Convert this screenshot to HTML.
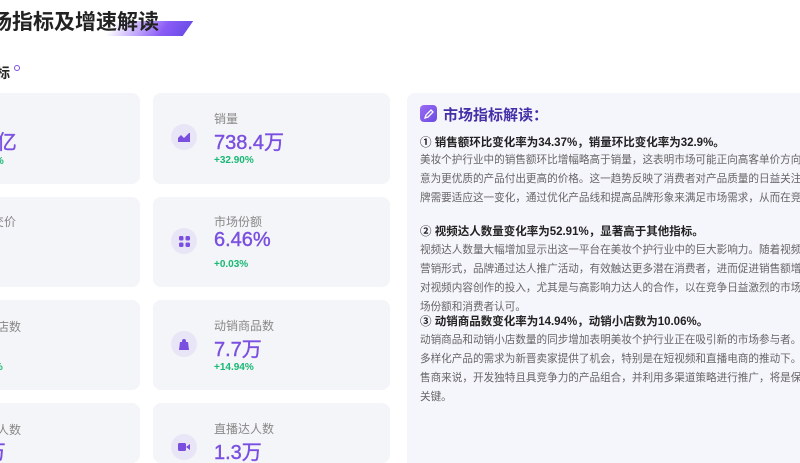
<!DOCTYPE html>
<html style="width:800px;height:463px;overflow:hidden"><head><meta charset="utf-8"><style>
*{margin:0;padding:0;box-sizing:border-box}
body{width:800px;height:463px;overflow:hidden;background:#fff;font-family:"Liberation Sans","Noto Sans CJK SC",sans-serif;position:relative}
.a{position:absolute;white-space:nowrap}
.card{position:absolute;background:#f4f5f8;border-radius:8px;width:237px;overflow:hidden}
.ic{position:absolute;left:18px;width:26px;height:26px;border-radius:50%;background:#e8e5f6;display:flex;align-items:center;justify-content:center}
.lb{position:absolute;left:61px;font-size:12px;color:#888;white-space:nowrap}
.vl{position:absolute;left:61px;font-family:"Liberation Sans Narrow","Liberation Sans","Noto Sans CJK SC",sans-serif;font-size:20px;color:#7a4fe0;font-weight:normal;white-space:nowrap;-webkit-text-stroke:0.4px #7a4fe0}
.ch{position:absolute;left:61px;font-size:10px;color:#17b873;font-weight:bold;white-space:nowrap}
.panel{position:absolute;left:407px;top:93px;width:393px;height:370px;background:#f5f5fc;border-radius:8px 0 0 0;overflow:hidden}
.h{position:absolute;left:13px;font-size:11.5px;font-weight:bold;color:#222;white-space:nowrap}
.p{position:absolute;left:13px;font-size:10.6px;color:#666;line-height:19px;white-space:nowrap}
</style></head><body>
<div class="a" style="left:110px;top:21px;width:78px;height:15px;background:linear-gradient(90deg,rgba(140,110,240,0),#8b5cf6 70%,#6d4de8);transform:skewX(-35deg)"></div>
<div class="a" style="left:-9px;top:6px;font-size:21px;font-weight:bold;color:#222">场指标及增速解读</div>
<div class="a" style="left:-4px;top:63px;font-size:14px;font-weight:bold;color:#222">标</div>
<div class="a" style="left:14px;top:65px;width:6px;height:6px;border:1.5px solid #7a4fe0;border-radius:50%"></div>

<div class="card" style="left:-97px;top:93px;height:91px">
<div class="lb" style="top:18px">销售额</div>
<div class="vl" style="top:33px;left:66px">4.8亿</div>
<div class="ch" style="top:63px">+34.37%</div></div>
<div class="card" style="left:-97px;top:197px;height:90px">
<div class="lb" style="top:16px;left:77px">均交价</div></div>
<div class="card" style="left:-97px;top:300px;height:90px">
<div class="lb" style="top:18px;left:82px">小店数</div>
<div class="ch" style="top:62px;left:60px">+10.06%</div></div>
<div class="card" style="left:-97px;top:403px;height:60px">
<div class="lb" style="top:18px;left:82px">达人数</div>
<div class="vl" style="top:33px;left:55px">2.1万</div></div>

<div class="card" style="left:153px;top:93px;height:91px">
<div class="ic" style="top:31px"><svg width="12" height="10" viewBox="0 0 12 10"><path d="M0 10V6l3-3 3 3 5-5 1 0v9z" fill="#7a4fe0"/></svg></div>
<div class="lb" style="top:17px">销量</div>
<div class="vl" style="top:33px">738.4万</div>
<div class="ch" style="top:62px">+32.90%</div></div>
<div class="card" style="left:153px;top:197px;height:90px">
<div class="ic" style="top:31px"><svg width="11" height="11" viewBox="0 0 11 11" fill="#7a4fe0"><rect width="4.5" height="4.5" rx="1.5"/><rect x="6.5" width="4.5" height="4.5" rx="1.5"/><rect y="6.5" width="4.5" height="4.5" rx="1.5"/><rect x="6.5" y="6.5" width="4.5" height="4.5" rx="1.5"/></svg></div>
<div class="lb" style="top:16px">市场份额</div>
<div class="vl" style="top:32px">6.46%</div>
<div class="ch" style="top:62px">+0.03%</div></div>
<div class="card" style="left:153px;top:300px;height:90px">
<div class="ic" style="top:31px"><svg width="10" height="11" viewBox="0 0 10 11"><path d="M3 3V2a2 2 0 0 1 4 0v1h2l1 8H0l1-8z" fill="#7a4fe0"/></svg></div>
<div class="lb" style="top:17px">动销商品数</div>
<div class="vl" style="top:33px">7.7万</div>
<div class="ch" style="top:62px">+14.94%</div></div>
<div class="card" style="left:153px;top:403px;height:60px">
<div class="ic" style="top:31px"><svg width="12" height="8" viewBox="0 0 12 8"><rect width="8" height="8" rx="1.5" fill="#7a4fe0"/><path d="M8 4l4-3v6z" fill="#7a4fe0"/></svg></div>
<div class="lb" style="top:17px">直播达人数</div>
<div class="vl" style="top:33px">1.3万</div></div>

<div class="panel">
<div class="a" style="left:13px;top:12px;width:17px;height:17px;border-radius:4px;background:linear-gradient(135deg,#9b6cf5,#6b4be0);display:flex;align-items:center;justify-content:center"><svg width="10" height="10" viewBox="0 0 10 10"><path d="M1 9l1-3 5-5 2 2-5 5z" fill="none" stroke="#fff" stroke-width="1.3"/></svg></div>
<div class="a" style="left:36px;top:11px;font-size:15px;font-weight:bold;color:#4530a8">市场指标解读：</div>
<div class="h" style="top:41px">① 销售额环比变化率为34.37%，销量环比变化率为32.9%。</div>
<div class="p" style="top:58px">美妆个护行业中的销售额环比增幅略高于销量，这表明市场可能正向高客单价方向<br>意为更优质的产品付出更高的价格。这一趋势反映了消费者对产品质量的日益关注<br>牌需要适应这一变化，通过优化产品线和提高品牌形象来满足市场需求，从而在竞</div>
<div class="h" style="top:130px">② 视频达人数量变化率为52.91%，显著高于其他指标。</div>
<div class="p" style="top:148px">视频达人数量大幅增加显示出这一平台在美妆个护行业中的巨大影响力。随着视频<br>营销形式，品牌通过达人推广活动，有效触达更多潜在消费者，进而促进销售额增<br>对视频内容创作的投入，尤其是与高影响力达人的合作，以在竞争日益激烈的市场<br>场份额和消费者认可。</div>
<div class="h" style="top:220px">③ 动销商品数变化率为14.94%，动销小店数为10.06%。</div>
<div class="p" style="top:238px">动销商品和动销小店数量的同步增加表明美妆个护行业正在吸引新的市场参与者。<br>多样化产品的需求为新晋卖家提供了机会，特别是在短视频和直播电商的推动下。<br>售商来说，开发独特且具竞争力的产品组合，并利用多渠道策略进行推广，将是保<br>关键。</div>
</div>
</body></html>
